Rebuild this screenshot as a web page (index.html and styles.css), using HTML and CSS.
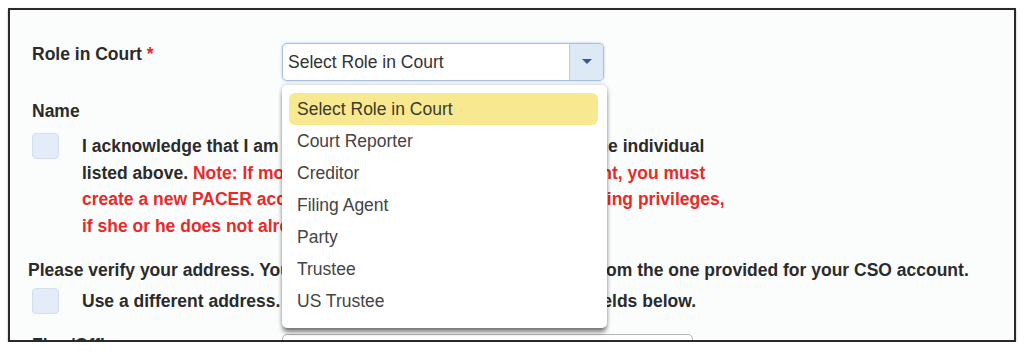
FILE: index.html
```html
<!DOCTYPE html>
<html lang="en">
<head>
  <meta charset="UTF-8" />
  <title>Filer Registration</title>
  <link rel="stylesheet" href="styles.css">
</head>
<body>
  <div class="frame">
    <form class="reg-form">
      <div class="form-row">
        <label class="field-label">Role in Court <span class="req">*</span></label>
        <div class="select-wrap">
          <div class="select-box">
            <span class="select-value">Select Role in Court</span>
            <span class="select-arrow">
              <svg width="10" height="6" viewBox="0 0 10 6"><path d="M0 0 H10 L5 5 Z" fill="#2d5d9c"/></svg>
            </span>
          </div>
          <ul class="select-menu">
            <li class="active">Select Role in Court</li>
            <li>Court Reporter</li>
            <li>Creditor</li>
            <li>Filing Agent</li>
            <li>Party</li>
            <li>Trustee</li>
            <li>US Trustee</li>
          </ul>
        </div>
      </div>

      <div class="section-label">Name</div>

      <div class="check-row">
        <span class="checkbox"></span>
        <p class="check-text">
          I acknowledge that I am legally authorized to file on behalf of the individual<br>
          listed above. <span class="note">Note: If more than one individual uses this account, you must<br>
          create a new PACER account for each person that requires e-filing privileges,<br>
          if she or he does not already have one.</span>
        </p>
      </div>

      <p class="verify-text">Please verify your address. You can use another address if it varies from the one provided for your CSO account.</p>

      <div class="check-row short">
        <span class="checkbox"></span>
        <p class="check-text">Use a different address. Please enter your new address in all fields below.</p>
      </div>

      <div class="form-row last">
        <label class="field-label">Firm/Office</label>
        <div class="text-input"></div>
      </div>
    </form>
  </div>
</body>
</html>
```

FILE: styles.css
```css
* {
  box-sizing: border-box;
  margin: 0;
  padding: 0;
}

body {
  background-color: #fff;
  font-family: "Liberation Sans", Arial, sans-serif;
  padding: 8px 10px 0 8px;
}

.frame {
  height: 334px;
  border: 2px solid #2a2a2a;
  background-color: #fbfdfd;
  overflow: hidden;
  box-shadow: 0 1px 2px rgba(0,0,0,0.3);
}

.reg-form {
  padding: 31px 0 0 22px;
  color: #2b2b2b;
  font-size: 17.5px;
  font-weight: bold;
  line-height: 26px;
}

.form-row {
  display: flex;
}

.field-label {
  width: 250px;
  flex-shrink: 0;
}

.req {
  color: #e42a2a;
}

.select-wrap {
  position: relative;
  margin-top: 2px;
}

.select-box {
  display: flex;
  width: 322px;
  height: 38px;
  border: 1px solid #a7c0df;
  border-radius: 5px;
  background-color: #fff;
  box-shadow: 0 0 3px rgba(110,160,220,0.55);
  overflow: hidden;
}

.select-value {
  flex: 1;
  padding-left: 5px;
  font-weight: normal;
  font-size: 17.5px;
  line-height: 36px;
  color: #333;
}

.select-arrow {
  width: 34px;
  display: flex;
  align-items: center;
  justify-content: center;
  border-left: 1px solid #b9cde6;
  background-color: #dee9f6;
}

.select-menu {
  position: absolute;
  top: 42px;
  left: 0;
  width: 325px;
  height: 243px;
  padding: 8px 9px 0 7px;
  list-style: none;
  background-color: #fff;
  border-radius: 5px;
  box-shadow: 0 5px 5px -1px rgba(0,0,0,0.5), 0 0 4px rgba(0,0,0,0.22);
  z-index: 10;
}

.select-menu li {
  height: 32px;
  padding-left: 8px;
  font-weight: normal;
  font-size: 17.5px;
  line-height: 32px;
  color: #444;
  border-radius: 6px;
}

.select-menu li.active {
  background-color: #f8e991;
  color: #3b3b2b;
}

.section-label {
  margin-top: 17px;
}

.check-row {
  display: flex;
  gap: 23px;
  margin-top: 9px;
}

.check-row.short {
  margin-top: 5px;
}

.checkbox {
  width: 27px;
  height: 26px;
  flex-shrink: 0;
  border: 1px solid #d3dfee;
  border-radius: 4px;
  background-color: #e3ecf8;
}

.check-text {
  line-height: 26.5px;
  white-space: nowrap;
}

.note {
  color: #e62b2b;
}

.verify-text {
  margin: 18px 0 0 -4px;
  white-space: nowrap;
}

.form-row.last {
  margin-top: 17px;
}

.text-input {
  width: 411px;
  height: 36px;
  margin-top: 2px;
  border: 1px solid #b5b5b5;
  border-radius: 5px;
  background-color: #fff;
}
```
